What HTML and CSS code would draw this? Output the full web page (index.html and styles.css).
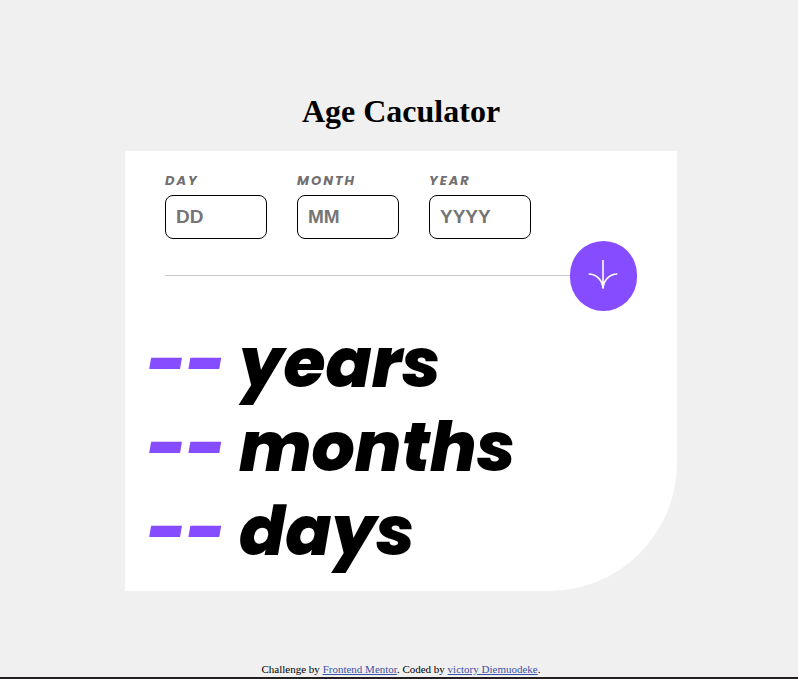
FILE: index.html
```html
<!DOCTYPE html>
<html lang="en">
<head>
  <meta charset="UTF-8">
  <meta name="viewport" content="width=device-width, initial-scale=1.0">
  <title>Age Caculator</title>
  <link rel="stylesheet" href="styles.css">
</head>
<body>
  <main class="page">
    <h1 class="title">Age Caculator</h1>
    <section class="card">
      <form class="form">
        <div class="fields">
          <div class="field">
            <label for="day">DAY</label>
            <input id="day" type="text" inputmode="numeric" placeholder="DD">
          </div>
          <div class="field">
            <label for="month">MONTH</label>
            <input id="month" type="text" inputmode="numeric" placeholder="MM">
          </div>
          <div class="field">
            <label for="year">YEAR</label>
            <input id="year" type="text" inputmode="numeric" placeholder="YYYY">
          </div>
        </div>
        <div class="divider">
          <span class="line"></span>
          <button class="submit" type="button" aria-label="Calculate age">
            <svg width="30" height="30" viewBox="0 0 46 46" fill="none" stroke="#fff" stroke-width="2.4" aria-hidden="true">
              <path d="M1 21.5C12 21.5 22 30 23 44V0M45 21.5C34 21.5 24 30 23 44"/>
            </svg>
          </button>
        </div>
      </form>
      <div class="results">
        <p class="result"><span class="value">--</span><span>years</span></p>
        <p class="result"><span class="value">--</span><span>months</span></p>
        <p class="result"><span class="value">--</span><span>days</span></p>
      </div>
    </section>
  </main>
  <footer class="attribution">
    Challenge by <a href="#">Frontend Mentor</a>. Coded by <a href="#">victory Diemuodeke</a>.
  </footer>
</body>
</html>
```
FILE: styles.css
```css
* {
  box-sizing: border-box;
  margin: 0;
}

body {
  display: flex;
  flex-direction: column;
  min-height: 100vh;
  padding-left: 4px;
  border-bottom: 2px solid #231f20;
  background: #f0f0f0;
  color: #000;
  font-family: "Liberation Serif", "Times New Roman", serif;
}

.page {
  flex: 1;
  display: flex;
  flex-direction: column;
  align-items: center;
  padding: 92px 16px 72px;
}

.title {
  margin-bottom: 21px;
  font-size: 32px;
  line-height: 38px;
}

.card {
  width: 100%;
  max-width: 552px;
  padding: 20px 22px 17px;
  border-radius: 0 0 128px 0;
  background: #fff;
}

.form {
  padding: 0 18px;
}

.fields {
  display: flex;
  gap: 30px;
}

.field {
  display: flex;
  flex-direction: column;
  gap: 4px;
}

.field label {
  color: #716f6f;
  font: italic 700 13px/20px Poppins, Inter, sans-serif;
  letter-spacing: 2px;
}

.field input {
  width: 102px;
  height: 44px;
  padding: 0 10px;
  border: 1px solid #000;
  border-radius: 8px;
  background: #fff;
  font: bold 19px "Liberation Sans", Arial, sans-serif;
}

.field input::placeholder {
  color: #757575;
}

.divider {
  display: flex;
  align-items: center;
  margin-top: 2px;
}

.line {
  flex: 1;
  height: 2px;
  border-top: 1px solid #c8c8c8;
}

.submit {
  display: grid;
  place-items: center;
  width: 67px;
  height: 70px;
  padding: 0 2px 2px 0;
  border: 0;
  border-radius: 35px;
  background: #854dff;
}

.results {
  margin-top: 11px;
}

.result {
  display: grid;
  grid-template-columns: 92px 1fr;
  font: italic 800 68px/84px Poppins, Inter, sans-serif;
}

.value {
  color: #854dff;
}

.attribution {
  padding-bottom: 1px;
  font-size: 11px;
  line-height: 13px;
  text-align: center;
}

.attribution a {
  color: #3e52a3;
}
```
